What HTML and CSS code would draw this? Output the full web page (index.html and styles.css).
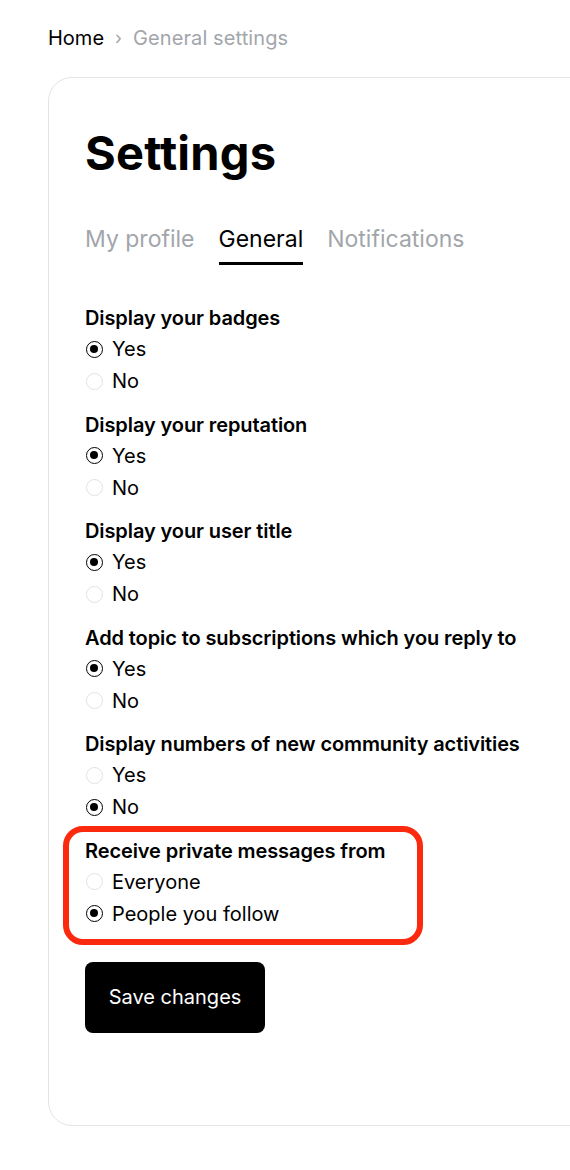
FILE: index.html
```html
<!DOCTYPE html>
<html lang="en">
<head>
  <meta charset="UTF-8" />
  <meta name="viewport" content="width=device-width, initial-scale=1.0"/>
  <title>General settings</title>
  <link rel="stylesheet" href="styles.css">
</head>
<body>
<div class="page">

  <nav class="crumbs">
    <a href="#" class="crumb-home">Home</a>
    <span class="crumb-sep">&#8250;</span>
    <span class="crumb-current">General settings</span>
  </nav>

  <main class="card">
    <h1>Settings</h1>

    <div class="tabs">
      <a href="#" class="tab">My profile</a>
      <a href="#" class="tab active">General</a>
      <a href="#" class="tab">Notifications</a>
    </div>

    <form class="options">
      <div class="group">
        <div class="group-label">Display your badges</div>
        <label class="radio"><input type="radio" name="badges" checked><span class="dot"></span>Yes</label>
        <label class="radio"><input type="radio" name="badges"><span class="dot"></span>No</label>
      </div>

      <div class="group">
        <div class="group-label">Display your reputation</div>
        <label class="radio"><input type="radio" name="rep" checked><span class="dot"></span>Yes</label>
        <label class="radio"><input type="radio" name="rep"><span class="dot"></span>No</label>
      </div>

      <div class="group">
        <div class="group-label">Display your user title</div>
        <label class="radio"><input type="radio" name="title" checked><span class="dot"></span>Yes</label>
        <label class="radio"><input type="radio" name="title"><span class="dot"></span>No</label>
      </div>

      <div class="group">
        <div class="group-label">Add topic to subscriptions which you reply to</div>
        <label class="radio"><input type="radio" name="subs" checked><span class="dot"></span>Yes</label>
        <label class="radio"><input type="radio" name="subs"><span class="dot"></span>No</label>
      </div>

      <div class="group">
        <div class="group-label">Display numbers of new community activities</div>
        <label class="radio"><input type="radio" name="activity"><span class="dot"></span>Yes</label>
        <label class="radio"><input type="radio" name="activity" checked><span class="dot"></span>No</label>
      </div>

      <div class="group highlight">
        <div class="group-label">Receive private messages from</div>
        <label class="radio"><input type="radio" name="pm"><span class="dot"></span>Everyone</label>
        <label class="radio"><input type="radio" name="pm" checked><span class="dot"></span>People you follow</label>
      </div>

      <button type="button" class="save">Save changes</button>
    </form>
  </main>

</div>
</body>
</html>
```

FILE: styles.css
```css
html, body {
  margin: 0;
  padding: 0;
}
body {
  font-family: Inter, 'Liberation Sans', sans-serif;
  color: #000;
  background-color: #ffffff;
}
a {
  color: inherit;
  text-decoration: none;
}
.page {
  overflow: hidden;
  padding: 26px 0 45px 48px;
}
.crumbs {
  display: flex;
  align-items: center;
  gap: 11px;
  font-size: 20px;
  line-height: 24px;
}
.crumb-sep {
  color: #a2a6ab;
  font-size: 18px;
}
.crumb-current {
  color: #a2a6ab;
  letter-spacing: 0.1px;
}
.card {
  margin-top: 27px;
  width: 600px;
  border: 1px solid #e4e4e4;
  border-radius: 24px;
  padding: 47px 0 92px 36px;
}
h1 {
  margin: 0;
  font-size: 47px;
  line-height: 56px;
  font-weight: 700;
  letter-spacing: 0.2px;
}
.tabs {
  display: flex;
  gap: 24px;
  margin-top: 44px;
}
.tab {
  font-size: 23px;
  line-height: 28px;
  padding-bottom: 9px;
  color: #a2a6ab;
  border-bottom: 3px solid transparent;
}
.tab.active {
  color: #000;
  border-bottom-color: #000;
}
.options {
  margin-top: 41px;
}
.group {
  margin-bottom: 15.5px;
  position: relative;
}
.group-label {
  font-size: 20px;
  line-height: 24px;
  font-weight: 600;
  letter-spacing: -0.1px;
  margin-bottom: 3px;
}
.radio {
  display: flex;
  align-items: center;
  gap: 9px;
  font-size: 20px;
  line-height: 24px;
  height: 32px;
}
.radio input {
  display: none;
}
.dot {
  width: 17px;
  height: 17px;
  box-sizing: border-box;
  border: 1px solid #e2e2e2;
  border-radius: 50%;
  position: relative;
  margin-left: 1px;
}
.radio input:checked + .dot {
  border: 1.5px solid #000;
}
.radio input:checked + .dot::after {
  content: "";
  position: absolute;
  left: 3px;
  top: 3px;
  width: 8px;
  height: 8px;
  border-radius: 50%;
  background: #000;
}
/* annotation frame drawn over the last group */
.highlight::after {
  content: "";
  position: absolute;
  left: -22px;
  top: -13px;
  width: 360px;
  height: 119px;
  box-sizing: border-box;
  border: 6px solid #fb2a0e;
  border-radius: 20px;
}
.save {
  display: block;
  margin-top: 32px;
  width: 180px;
  height: 71px;
  background: #000;
  color: #fff;
  border: 0;
  border-radius: 8px;
  font-family: inherit;
  font-size: 20px;
}
```
